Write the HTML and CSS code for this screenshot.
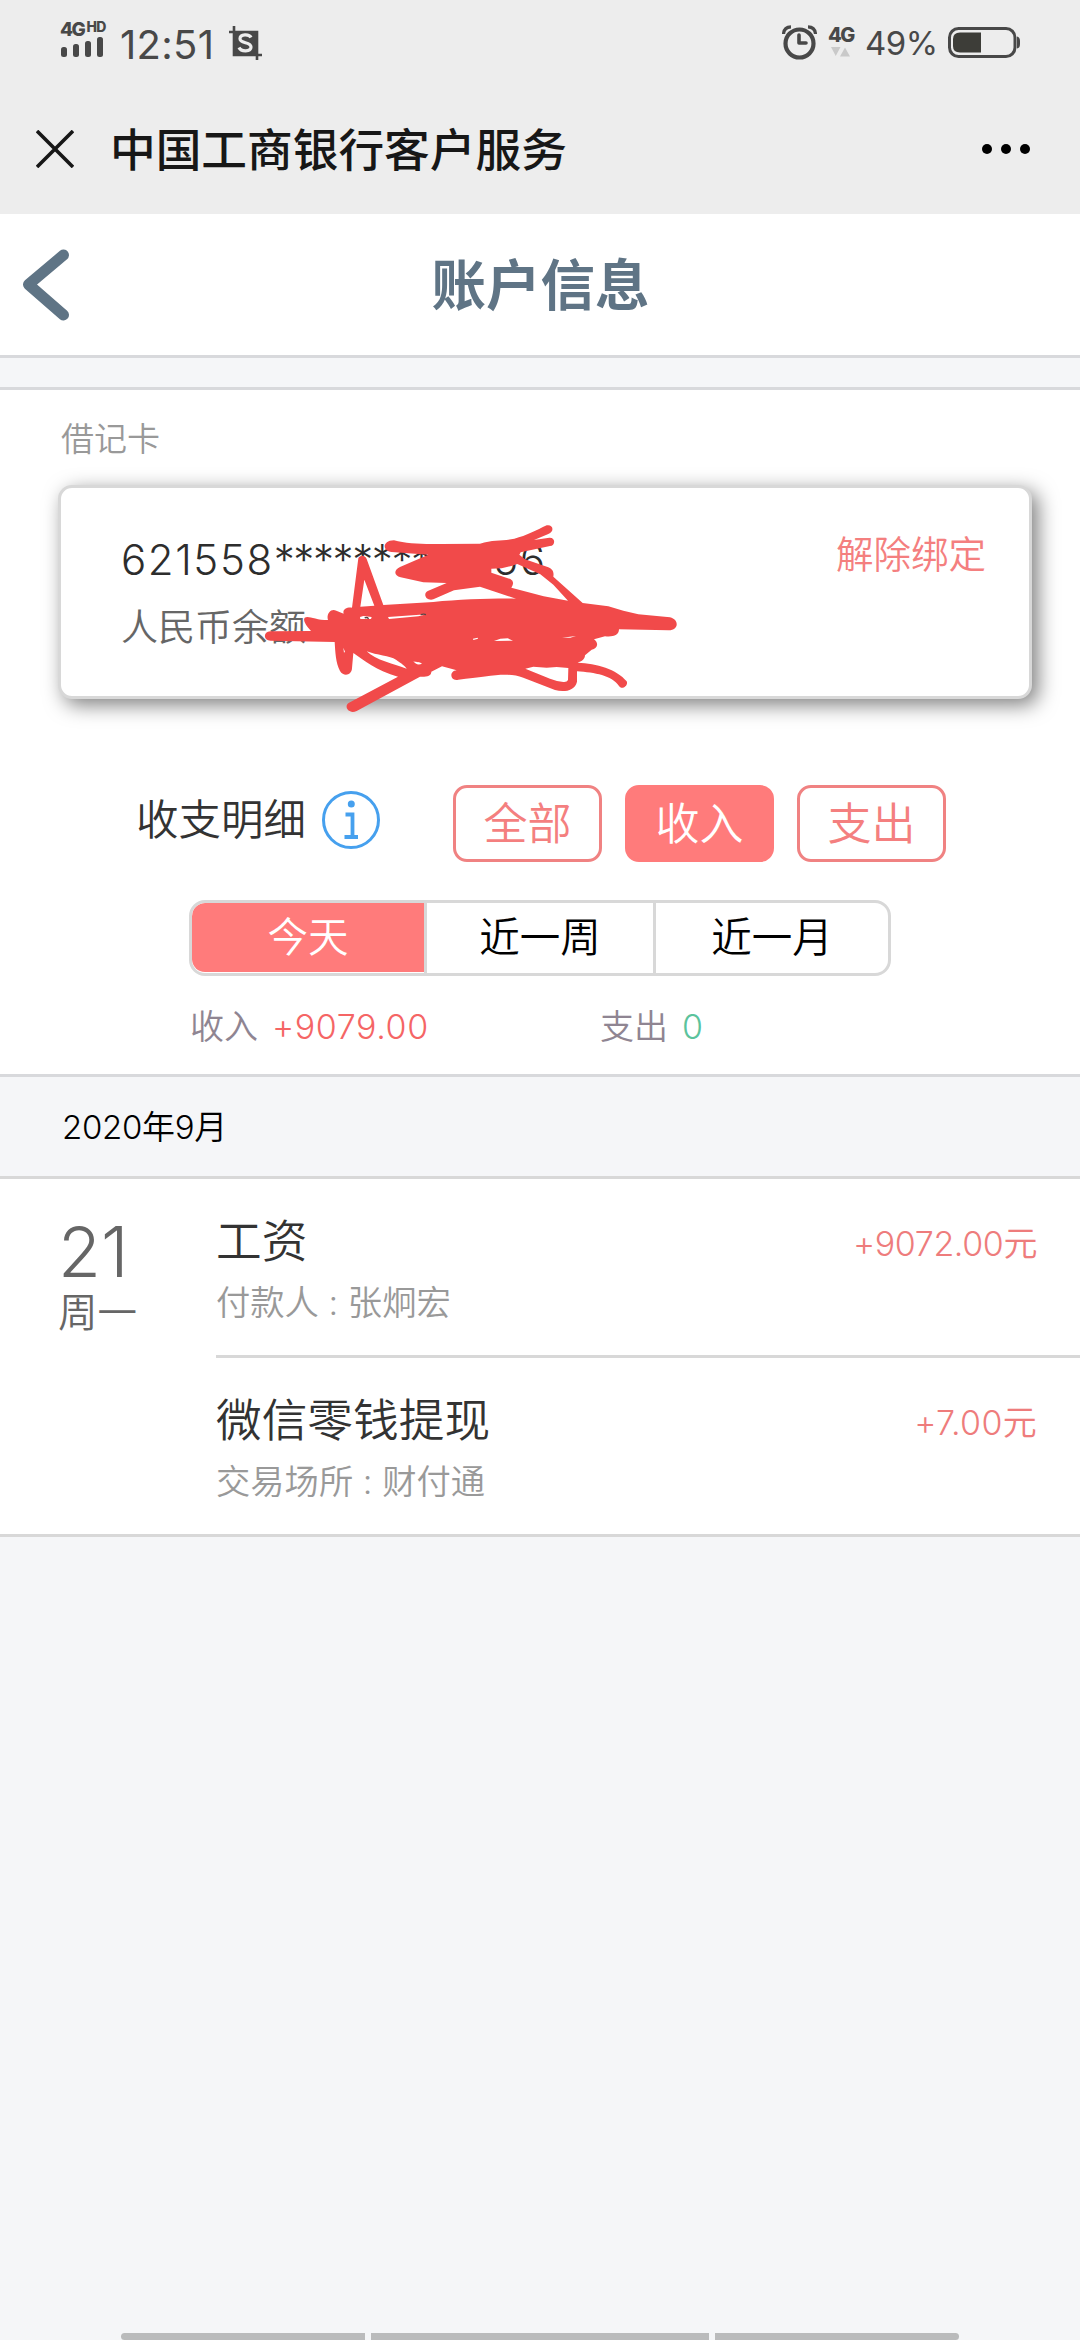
FILE: index.html
```html
<!DOCTYPE html>
<html lang="zh-CN">
<head>
<meta charset="utf-8">
<title>中国工商银行客户服务</title>
<link rel="stylesheet" href="styles.css">
</head>
<body>
<div class="screen">
  <div class="status">
    <div class="network">
      <div class="net-label">4G<span class="hd">HD</span></div>
      <svg class="signal" width="42" height="20" viewBox="0 0 42 20" fill="#484848"><rect y="10" width="6" height="10" rx="2.5"/><rect x="12" y="7" width="6" height="13" rx="2.5"/><rect x="24" y="4" width="6" height="16" rx="2.5"/><rect x="36" width="6" height="20" rx="2.5"/></svg>
    </div>
    <span class="clock">12:51</span>
    <span class="shot">
      <svg width="33" height="34" viewBox="0 0 33 34"><path d="M0 6H28V28M5 0V29H33M28 28V34" fill="none" stroke="#484848" stroke-width="2.6"/><rect x="4" y="5" width="25" height="25" fill="#484848"/><path d="M22 11.5C20.5 8 11 7.5 11 12.8C11 18 22 15.5 22 21C22 26 12 26 10 21.5" fill="none" stroke="#ededed" stroke-width="3.2"/></svg>
    </span>
    <div class="status-right">
      <svg width="35" height="35" viewBox="0 0 35 35" fill="none" stroke="#484848"><circle cx="17.5" cy="18.5" r="14" stroke-width="4.2"/><path d="M17 10V18H24" stroke-width="3.6" stroke-linecap="round" stroke-linejoin="round"/><path d="M1.5 9Q2 2 9 1.8M33.500 9Q33 2 26 1.8" stroke-width="3.2"/></svg>
      <div class="data"><span>4G</span>
        <svg width="20" height="10" viewBox="0 0 20 10" fill="#c9c9c9"><path d="M0 0H9.500L4.750 9ZM9 9.500H19L14 .5Z"/></svg>
      </div>
      <span class="percent">49%</span>
      <svg class="battery" width="73" height="31" viewBox="0 0 73 31"><rect x="1.500" y="1.500" width="65.500" height="28" rx="9" fill="none" stroke="#484848" stroke-width="3"/><path d="M12 5.500H33V25.500H12Q5 25.500 5 19V12Q5 5.500 12 5.500Z" fill="#3d3d38"/><path d="M69 9.500Q72 10 72 14V17Q72 21 69 21.500Z" fill="#484848"/></svg>
    </div>
  </div>
  <div class="wechat">
    <svg class="close" width="38" height="38" viewBox="0 0 38 38"><path d="M1 1L37 37M37 1L1 37" stroke="#171717" stroke-width="3.600"/></svg>
    <span class="wechat-title">中国工商银行客户服务</span>
    <svg class="dots" width="50" height="12" viewBox="0 0 50 12"><circle cx="6" cy="6" r="5"/><circle cx="25" cy="6" r="5"/><circle cx="44" cy="6" r="5"/></svg>
  </div>
  <header class="header">
    <svg class="back" width="52" height="76" viewBox="0 0 52 76"><path d="M43.500 8L8.500 37.500L43.500 68" fill="none" stroke="#5f7485" stroke-width="11" stroke-linecap="round" stroke-linejoin="round"/></svg>
    <h1>账户信息</h1>
  </header>
  <div class="gap"></div>
  <section class="account">
    <div class="kind">借记卡</div>
    <div class="card">
      <div class="card-info">
        <div class="number">621558<span class="stars">*********</span><span class="tail">56</span></div>
        <div class="balance">人民币余额</div>
      </div>
      <a class="unbind">解除绑定</a>
      <svg class="scribble" width="460" height="230" viewBox="0 0 1380 690" fill="#f14a4a">
        <path fill-rule="evenodd" d="M462 121C500 132 550 133 605 132L720 131C760 118 790 123 823 116C860 107 890 90 920 76C940 72 944 95 925 102L882 120L928 113C948 112 946 138 930 138L842 157L838 164L855 178L925 202C943 210 941 222 940 230L1028 309L1105 319L1150 332L1195 343L1290 352C1320 360 1315 392 1285 391L1137 388C1137 405 1120 412 1095 409L1062 418C1078 430 1072 447 1055 449L1035 466C1035 480 1020 486 1013 488C1070 491 1130 507 1160 544C1166 557 1145 571 1137 558C1115 526 1065 518 1011 514V545C1004 574 970 577 945 570L850 533C800 515 750 529 655 539C629 545 627 512 650 511L606 499L574 515C574 528 560 531 540 530L350 633C325 644 310 618 327 608L474 530C410 512 370 480 340 459L336 505C335 526 311 531 300 513C287 489 286 456 284 426L92 422C69 421 69 395 91 394L213 393C198 378 188 361 194 353C205 345 225 360 264 360C258 342 273 323 289 332L311 341C307 329 319 321 336 323L355 175C359 164 375 164 380 177L430 315L580 306C660 298 760 295 828 296L720 260L642 271L580 298C557 304 547 279 565 272L620 249L550 247L482 232C461 226 461 210 480 201L565 164L455 156C427 154 425 122 462 121Z
          M373 239L403 317L361 320ZM360 351L370 348L395 351L393 357L361 357ZM444 351L560 343L535 349L447 357ZM310 443L315 455L312 458ZM380 454C410 466 450 467 468 479C485 491 495 497 500 506C465 493 405 480 380 454ZM520 484C532 489 537 484 546 491C536 496 526 493 520 484ZM699 416L713 413L714 416L700 420ZM762 423L781 416L803 415L819 422ZM966 413L1008 408L991 413ZM856 506L880 500L920 503L950 501L985 504L984 540Q981 547 970 546Q950 544 930 536ZM754 206L785 205L814 198L832 192L901 223L940 254L984 302L911 289L814 263Q826 245 811 237L754 218Z"/>
        <path fill="none" stroke="#5b4545" stroke-width="4" d="M374 354Q380 350 386 356M542 344Q552 341 558 344"/>
      </svg>
    </div>
    <div class="filter">
      <span class="filter-title">收支明细</span>
      <svg class="info" width="58" height="58" viewBox="0 0 58 58"><circle cx="29" cy="29" r="27.500" fill="none" stroke="#46a0ee" stroke-width="3"/><circle cx="29.300" cy="13" r="3.500" fill="#46a0ee"/><path d="M23.500 23.500H30.500V45.500M22.500 46H36" fill="none" stroke="#46a0ee" stroke-width="3.800"/></svg>
      <div class="types"><button>全部</button><button class="on">收入</button><button>支出</button></div>
    </div>
    <div class="periods"><span class="picked">今天</span><span>近一周</span><span>近一月</span></div>
    <div class="totals"><div>收入<b class="in">+9079.00</b></div><div>支出<b class="out">0</b></div></div>
  </section>
  <div class="month">2020年9月</div>
  <section class="records">
    <div class="date"><div class="day">21</div><div class="weekday">周一</div></div>
    <div class="list">
      <div class="record"><div><div class="name">工资</div><div class="note">付款人 : 张炯宏</div></div><div class="amount">+9072.00元</div></div>
      <div class="record"><div><div class="name">微信零钱提现</div><div class="note">交易场所 : 财付通</div></div><div class="amount short">+7.00元</div></div>
    </div>
  </section>
  <footer class="nav"><i></i><i></i><i></i></footer>
</div>
</body>
</html>
```
FILE: styles.css
```css
* { box-sizing: border-box; }
body { margin: 0; background: #f5f6f8; font-family: Inter, "Noto Sans CJK SC", sans-serif; font-weight: 350; }
svg { display: block; flex: none; }
.screen { width: 1080px; height: 2340px; overflow: hidden; display: flex; flex-direction: column; }
.screen > * { flex: none; }

.status { height: 84px; background: #ededed; color: #484848; display: flex; align-items: flex-start; padding: 0 60px; }
.network { width: 60px; padding-top: 20px; }
.net-label { height: 17px; display: flex; align-items: flex-start; font: 800 19px/19px Inter, sans-serif; letter-spacing: -1.500px; }
.hd { font-size: 14px; line-height: 14px; letter-spacing: -.5px; margin-left: 2px; }
.signal { margin-left: 1px; }
.clock { width: 109px; padding-top: 24px; font-size: 40px; line-height: 42px; font-weight: 400; letter-spacing: .3px; white-space: nowrap; }
.shot { padding-top: 26px; }
.status-right { margin-left: auto; display: flex; padding-top: 25px; }
.data { margin-left: 11px; width: 37px; }
.data span { display: block; height: 22px; font: 800 20px/20px Inter, sans-serif; letter-spacing: -1.500px; }
.data svg { margin-left: 3px; }
.percent { width: 83px; font-size: 33px; line-height: 36px; font-weight: 400; letter-spacing: -.5px; }
.battery { margin-top: 2px; margin-right: -1px; }

.wechat { height: 130px; background: #ededed; display: flex; align-items: center; padding: 0 49px 0 36px; }
.wechat-title { margin-left: 36px; padding-top: 3px; font-size: 45.700px; line-height: 60px; font-weight: 500; color: #171717; }
.dots { margin-left: auto; }

.header { height: 144px; background: #fff; border-bottom: 3px solid #d8d9dc; display: flex; align-items: center; padding-left: 20px; }
.header h1 { flex: 1; margin: 0 71px 0 0; text-align: center; color: #5f7485; font-size: 54.500px; line-height: 60px; font-weight: 700; }
.gap { height: 29px; }

.account { height: 690px; background: #fff; border-top: 3px solid #d8d9dc; border-bottom: 3px solid #d8d9dc; }
.kind { margin: 25px 0 21px 61px; font-size: 33px; line-height: 49px; color: #999; }
.card { position: relative; width: 974px; height: 214px; margin-left: 58px; border: 3px solid #d8d8d8; border-radius: 14px; background: #fff; box-shadow: 6px 6px 20px rgba(0,0,0,.5); display: flex; justify-content: space-between; padding: 47px 43px 0 60px; }
.number { font-size: 42px; line-height: 50px; font-weight: 300; color: #2d2d2d; letter-spacing: 1.600px; white-space: nowrap; }
.stars { letter-spacing: -1.400px; }
.tail { margin-left: 43px; }
.balance { margin-top: 17px; font-size: 37px; line-height: 52px; color: #666; }
.unbind { margin-top: -5px; font-size: 37.500px; line-height: 50px; color: #f47f7f; }
.scribble { position: absolute; left: 179px; top: 12px; }

.filter { display: flex; align-items: center; height: 78px; margin: 85px 0 0 136px; }
.filter-title { font-size: 42.500px; line-height: 60px; color: #333; width: 186px; margin-top: -6px; }
.info { margin-top: -7px; }
.types { display: flex; gap: 23px; margin-left: 73px; }
.types button { width: 149px; height: 77px; padding: 0; border: 3px solid #f08282; border-radius: 14px; background: #fff; color: #f47f7f; font: inherit; font-size: 44px; line-height: 73px; }
.types .on { background: #ff7b7b; border-color: #ff7b7b; color: #fff; }
.periods { width: 702px; height: 76px; margin: 38px 0 0 189px; border: 3px solid #d8d8d8; border-radius: 16px; overflow: hidden; display: grid; grid-template-columns: 232px 229px 235px; font-size: 40.500px; line-height: 70px; text-align: center; color: #000; }
.periods span + span { border-left: 3px solid #d8d8d8; }
.periods .picked { background: #ff7b7b; color: #fff; height: 69px; border-radius: 13px 0 0 13px; }
.totals { display: grid; grid-template-columns: 410px 1fr; margin: 25px 0 0 190px; font-size: 34px; line-height: 52px; color: #8f8592; }
.totals b { font-weight: 350; margin-left: 14px; letter-spacing: .6px; }
.totals .in { color: #f56565; }
.totals .out { color: #5bc39c; }

.month { height: 99px; padding-left: 62px; font-size: 33px; line-height: 101px; color: #000; letter-spacing: -.3px; }
.records { height: 361px; background: #fff; border-top: 3px solid #d8d8d8; border-bottom: 3px solid #d8d8d8; display: flex; }
.date { width: 216px; padding: 32px 0 0 58px; color: #666; }
.day { font-size: 70px; line-height: 82px; letter-spacing: 0; }
.weekday { font-size: 39.500px; line-height: 40px; }
.list { flex: 1; }
.record { height: 179px; display: flex; justify-content: space-between; padding: 33px 43px 0 0; }
.record:first-child { border-bottom: 3px solid #d8d8d8; }
.name { font-size: 45.700px; line-height: 60px; color: #333; }
.note { font-size: 34.300px; line-height: 62px; color: #999; }
.amount { font-size: 34px; line-height: 64px; color: #ee7c7c; letter-spacing: -.4px; }
.amount.short { letter-spacing: .3px; }

.nav { margin-top: auto; height: 7px; display: grid; grid-template-columns: 244px 338px 244px; gap: 6px; padding-left: 121px; }
.nav i { background: #babbbc; }
.nav i:first-child { border-radius: 4px 0 0 4px; }
.nav i:last-child { border-radius: 0 4px 4px 0; }
```
